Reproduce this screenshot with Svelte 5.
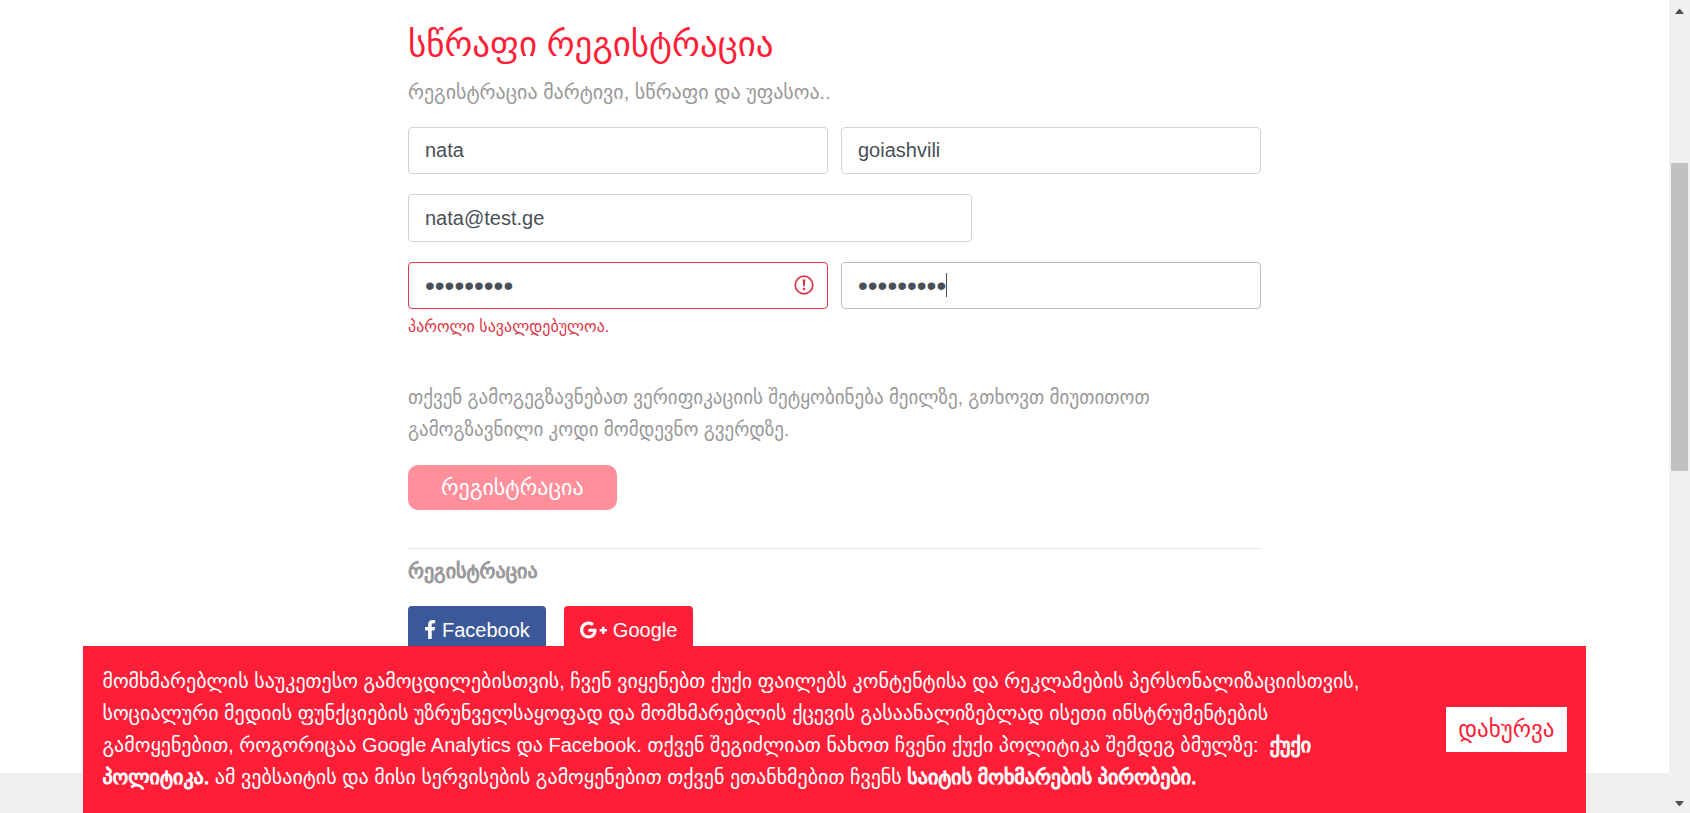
<script>
  let firstName = $state('nata');
  let lastName = $state('goiashvili');
  let email = $state('nata@test.ge');
  let password = $state('nata12345');
  let repeat = $state('nata12345');
</script>

<div class="window">
  <div class="page">
    <main>
      <h1>სწრაფი რეგისტრაცია</h1>
      <p class="lead">რეგისტრაცია მარტივი, სწრაფი და უფასოა..</p>

      <form onsubmit={(e) => e.preventDefault()}>
        <div class="row">
          <input type="text" aria-label="სახელი" bind:value={firstName} />
          <input type="text" aria-label="გვარი" bind:value={lastName} />
        </div>
        <div class="row">
          <input class="email" type="email" aria-label="ელ-ფოსტა" bind:value={email} />
        </div>
        <div class="row">
          <div class="field">
            <input class="invalid" type="password" aria-label="პაროლი" aria-describedby="password-error" bind:value={password} />
            <svg class="alert" viewBox="0 0 20 20" aria-hidden="true">
              <circle cx="10" cy="10" r="8.8" fill="none" stroke="#dc3545" stroke-width="1.7" />
              <path d="M8.700 4.600h2.600l-.5 7H9.200z" fill="#dc3545" />
              <circle cx="10" cy="14" r="1.3" fill="#dc3545" />
            </svg>
          </div>
          <div class="field">
            <input class="active" type="password" aria-label="გაიმეორეთ პაროლი" bind:value={repeat} />
            <span class="caret"></span>
          </div>
        </div>
        <p class="error" id="password-error">პაროლი სავალდებულოა.</p>
        <p class="note">თქვენ გამოგეგზავნებათ ვერიფიკაციის შეტყობინება მეილზე, გთხოვთ მიუთითოთ გამოგზავნილი კოდი მომდევნო გვერდზე.</p>
        <button class="submit" type="submit">რეგისტრაცია</button>
      </form>

      <section class="social">
        <h2>რეგისტრაცია</h2>
        <div class="providers">
          <button class="facebook" type="button">
            <svg width="12" height="20" viewBox="0 0 12 20" aria-hidden="true">
              <path d="M11.2.2v3.1H9.400c-1.400 0-1.700.7-1.700 1.700v2.100h3.400l-.5 3.400H7.700V19H4.100v-8.500h-3V7.100h3V4.500C4.100 1.600 5.900 0 8.600 0c1.200 0 2.300.1 2.600.2z" fill="#fff" />
            </svg>
            Facebook
          </button>
          <button class="google" type="button">
            <svg width="27" height="18" viewBox="12 56 616 400" aria-hidden="true">
              <path d="M386.061 228.496c1.834 9.692 3.143 19.384 3.143 31.956C389.204 370.205 315.599 448 204.800 448c-106.084 0-192-85.915-192-192s85.916-192 192-192c51.864 0 95.083 18.859 128.611 50.292l-52.126 50.030c-14.145-13.621-39.028-29.599-76.485-29.599-65.484 0-118.920 54.221-118.920 121.277 0 67.056 53.436 121.277 118.920 121.277 75.961 0 104.513-54.745 108.965-82.773H204.800v-66.009h181.261zm185.406 6.437V179.200h-56.001v55.733h-55.733v56.001h55.733v55.733h56.001v-55.733h55.733v-56.001h-55.733z" fill="#fff" />
            </svg>
            Google
          </button>
        </div>
      </section>
    </main>
    <footer></footer>

    <aside class="cookies">
      <p>
        მომხმარებლის საუკეთესო გამოცდილებისთვის, ჩვენ ვიყენებთ ქუქი ფაილებს კონტენტისა და რეკლამების პერსონალიზაციისთვის,
        სოციალური მედიის ფუნქციების უზრუნველსაყოფად და მომხმარებლის ქცევის გასაანალიზებლად ისეთი ინსტრუმენტების
        გამოყენებით, როგორიცაა Google Analytics და Facebook. თქვენ შეგიძლიათ ნახოთ ჩვენი ქუქი პოლიტიკა შემდეგ ბმულზე:&nbsp;
        <a href="#cookies">ქუქი პოლიტიკა.</a>
        ამ ვებსაიტის და მისი სერვისების გამოყენებით თქვენ ეთანხმებით ჩვენს
        <a href="#terms">საიტის მოხმარების პირობები.</a>
      </p>
      <button type="button">დახურვა</button>
    </aside>
  </div>

  <div class="scrollbar" aria-hidden="true">
    <svg viewBox="0 0 21 21"><path d="M6 14h9l-4-5h-1z" fill="#505050" /></svg>
    <div class="track"><div class="thumb"></div></div>
    <svg viewBox="0 0 21 21"><path d="M6 9h9l-4 5h-1z" fill="#505050" /></svg>
  </div>
</div>

<style>
  :global(body) {
    margin: 0;
    background: #fff;
  }

  .window {
    display: flex;
    height: 100vh;
    overflow: hidden;
    font-family: 'Liberation Sans', 'DejaVu Sans', sans-serif;
    font-size: 20px;
    line-height: 32px;
    color: #999;
  }

  .page {
    position: relative;
    flex: 1;
    min-width: 0;
    display: flex;
    flex-direction: column;
  }

  main {
    box-sizing: border-box;
    flex: 1;
    min-height: 0;
    width: 100%;
    max-width: 853px;
    margin: 0 auto;
    padding-top: 20px;
  }

  h1,
  h2,
  p {
    margin: 0;
  }

  h1 {
    font-size: 35px;
    font-weight: 400;
    line-height: 48px;
    color: #ff1e37;
  }

  .lead {
    margin: 8px 0 19px;
  }

  .row {
    display: flex;
    gap: 13px;
    margin-bottom: 20px;
  }

  .row > * {
    flex: 1;
    min-width: 0;
  }

  .field {
    position: relative;
    display: flex;
  }

  input {
    box-sizing: border-box;
    width: 100%;
    height: 47px;
    padding: 0 16px;
    border: 1px solid #ced4da;
    border-radius: 4px;
    background: #fff;
    font: inherit;
    color: #495057;
    outline: none;
  }

  input[type='password'] {
    font-size: 28px;
  }

  .row .email {
    flex: 0 1 564px;
    height: 48px;
  }

  .row .invalid {
    border-color: #dc3545;
  }

  .row .active {
    border-color: #bbb;
  }

  .alert {
    position: absolute;
    top: 13px;
    right: 14px;
    width: 20px;
    height: 20px;
  }

  .caret {
    position: absolute;
    top: 11px;
    left: 105px;
    width: 1px;
    height: 24px;
    background: #495057;
  }

  .error {
    margin-top: -12px;
    font-size: 16px;
    line-height: 20px;
    color: #dc3545;
  }

  .note {
    margin: 45px 0 19px;
    font-size: 19px;
  }

  .submit {
    display: block;
    height: 45px;
    padding: 0 33px;
    border: 0;
    border-radius: 10px;
    background: #ff8f9b;
    font: inherit;
    font-size: 22px;
    color: #fff;
  }

  .social {
    margin-top: 38px;
    padding-top: 6px;
    border-top: 1px solid #e5e5e5;
  }

  h2 {
    font-size: 20px;
    font-weight: 400;
    line-height: 32px;
    -webkit-text-stroke: 1px currentColor;
  }

  .providers {
    display: flex;
    gap: 18px;
    margin-top: 19px;
  }

  .providers button {
    display: flex;
    align-items: center;
    gap: 6px;
    height: 48px;
    padding: 0 16px;
    border: 0;
    border-radius: 4px;
    font: inherit;
    color: #fff;
  }

  .facebook {
    background: #3b5998;
  }

  .google {
    background: #ff1e37;
  }

  footer {
    height: 40px;
    background: #efefef;
  }

  .cookies {
    position: absolute;
    right: 5%;
    bottom: 0;
    left: 5%;
    display: flex;
    align-items: center;
    justify-content: space-between;
    gap: 50px;
    padding: 19px 19px 20px;
    background: #ff1e37;
    color: #fff;
  }

  .cookies p {
    flex: 1;
  }

  .cookies a {
    color: inherit;
    text-decoration: none;
    -webkit-text-stroke: 1px currentColor;
  }

  .cookies button {
    height: 45px;
    padding: 0 12px;
    border: 0;
    background: #fff;
    font: inherit;
    font-size: 23px;
    color: #ff1e37;
  }

  .scrollbar {
    display: flex;
    flex-direction: column;
    width: 21px;
    background: #f0f0f0;
  }

  .scrollbar svg {
    flex: none;
    width: 21px;
    height: 21px;
  }

  .track {
    flex: 1;
    padding: 0 2px;
  }

  .thumb {
    height: 40%;
    margin-top: 142px;
    background: #c1c1c1;
  }
</style>
